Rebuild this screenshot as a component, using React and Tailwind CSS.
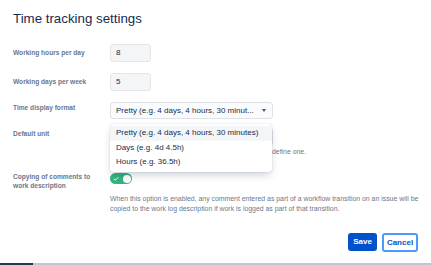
import { Check } from 'lucide-react';

const Label = ({ children, className = '' }) => (
    <div className={`w-[97px] shrink-0 text-[6.6px] font-bold text-[#6b778c] ${className}`}>
        {children}
    </div>
);

const TextInput = ({ value }) => (
    <div className="w-[41px] h-[18px] flex items-center pl-[5px] rounded-[3px] bg-[#f4f5f7] border border-[#e4e6ea] text-[8px] text-[#172b4d]">
        {value}
    </div>
);

const menuItems = [
    'Pretty (e.g. 4 days, 4 hours, 30 minutes)',
    'Days (e.g. 4d 4.5h)',
    'Hours (e.g. 36.5h)'
];

export default function App() {
    return (
        <div className="relative w-[431px] h-[265px] bg-white overflow-hidden flex flex-col font-['Liberation_Sans',Arial,sans-serif]">
            <div className="px-[13px]">
                <h1 className="pt-[11px] text-[13.3px] leading-[16px] text-[#172b4d]">Time tracking settings</h1>

                <div className="mt-[17px] flex items-center h-[18px]">
                    <Label>Working hours per day</Label>
                    <TextInput value="8" />
                </div>

                <div className="mt-[11px] flex items-center h-[18px]">
                    <Label>Working days per week</Label>
                    <TextInput value="5" />
                </div>

                <div className="mt-[11px] flex items-start">
                    <Label className="leading-[12px]">Time display format</Label>
                    <div className="w-[163px] h-[17px] flex items-center justify-between pl-[5px] pr-[6px] rounded-[3px] bg-[#fafbfc] border border-[#dfe1e6] text-[8px] text-[#172b4d]">
                        <span>Pretty (e.g. 4 days, 4 hours, 30 minut...</span>
                        <span className="w-0 h-0 border-l-[2.5px] border-r-[2.5px] border-t-[3px] border-l-transparent border-r-transparent border-t-[#42526e]" />
                    </div>
                </div>

                <div className="mt-[9px] flex items-start">
                    <Label className="leading-[12px]">Default unit</Label>
                    <div className="flex flex-col">
                        {/* select sits under the open menu */}
                        <div className="w-[163px] h-[18px] rounded-[3px] bg-[#fafbfc] border border-[#dfe1e6]" />
                        <div className="mt-[1px] flex text-[6.9px] leading-[10px] text-[#6b778c] whitespace-nowrap">
                            <span className="w-[162px] shrink-0" />
                            <span>define one.</span>
                        </div>
                    </div>
                </div>

                <div className="mt-[16px] flex items-start">
                    <Label className="leading-[8.5px]">Copying of comments to<br />work description</Label>
                    <div className="w-[22px] h-[11px] rounded-full bg-[#36b37e] flex items-center justify-between pl-[3px] pr-[1.5px]">
                        <Check className="w-[6px] h-[6px] text-white" strokeWidth={4} />
                        <span className="w-[8px] h-[8px] rounded-full bg-white" />
                    </div>
                </div>

                <p className="mt-[4px] ml-[97px] text-[6.9px] leading-[10px] text-[#6b778c] whitespace-nowrap">
                    When this option is enabled, any comment entered as part of a workflow transition on an issue will be<br />
                    copied to the work log description if work is logged as part of that transition.
                </p>

                <div className="mt-[19px] flex justify-end gap-[5px]">
                    <button type="button" className="w-[29px] h-[18px] rounded-[3px] bg-[#0052cc] text-white text-[8px] font-bold">
                        Save
                    </button>
                    <button type="button" className="w-[36px] h-[19px] rounded-[3px] bg-white border-2 border-[#4c9aff] text-[#0052cc] text-[8px] font-bold">
                        Cancel
                    </button>
                </div>
            </div>

            <div className="mt-auto h-[2px] flex bg-[#c1c7d0]">
                <div className="w-[33px] bg-[#253858]" />
            </div>

            {/* open dropdown menu */}
            <div className="absolute left-[110px] top-[124px] w-[162px] py-[2px] rounded-[3px] bg-white shadow-[0_4px_8px_-2px_rgba(9,30,66,0.25),0_0_1px_rgba(9,30,66,0.31)]">
                {menuItems.map((item, i) => (
                    <div
                        key={item}
                        className={`h-[14.5px] flex items-center pl-[6px] text-[8px] text-[#172b4d] ${i === 0 ? 'bg-[#f4f5f7]' : ''}`}
                    >
                        {item}
                    </div>
                ))}
            </div>
        </div>
    );
}
